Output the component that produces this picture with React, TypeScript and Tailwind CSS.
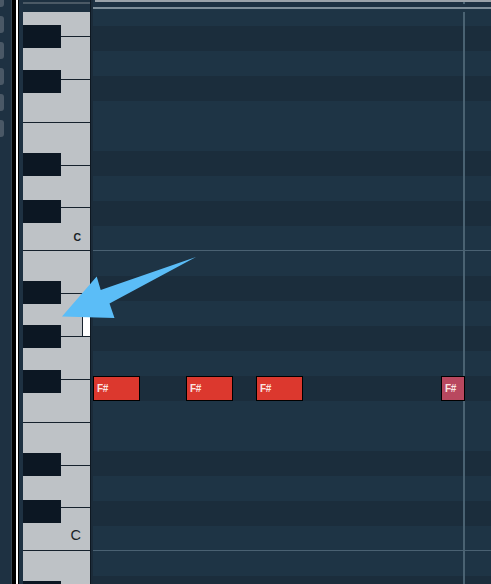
import React from "react";

// piano roll rows, from the partial A at the top downwards
const ROWS: Array<"w" | "b" | "c"> = [
  "b", "w", "b", "w", "w", "b", "w", "b", "c",
  "w", "b", "w", "b", "w", "b", "w", "w", "b", "w", "b", "c",
  "w", "b",
];

// white keys under the header; label / marker per key
const WHITE_KEYS: Array<{ h: string; label?: "sm" | "lg"; marker?: boolean }> = [
  { h: "h-[25px]" },
  { h: "h-[42.86px]" },
  { h: "h-[42.86px]" },
  { h: "h-[42.86px]" },
  { h: "h-[42.86px]" },
  { h: "h-[42.86px]", label: "sm" },
  { h: "h-[42.86px]" },
  { h: "h-[42.86px]", marker: true },
  { h: "h-[42.86px]" },
  { h: "h-[42.86px]" },
  { h: "h-[42.86px]" },
  { h: "h-[42.86px]" },
  { h: "h-[42.86px]", label: "lg" },
  { h: "h-[42.86px]" },
];

const BLACK_KEYS = [13, 58, 141, 188, 269, 313, 358, 441, 488, 569];

const NOTES = [
  { left: 0, w: 47, pink: false },
  { left: 93, w: 47, pink: false },
  { left: 163, w: 47, pink: false },
  { left: 348, w: 24, pink: true },
];

const Sidebar = () => (
  <div className="flex flex-col gap-[9px] w-[11px] shrink-0 bg-[#1e3142]">
    <div className="h-[7px] w-[4px] rounded-br-[3px] bg-[#4a5866]" />
    {[0, 1, 2, 3, 4].map((i) => (
      <div key={i} className="h-[17px] w-[4px] rounded-r-[3px] bg-[#4a5866]" />
    ))}
  </div>
);

const Keyboard = () => (
  <div className="flex flex-col w-[67px] shrink-0 bg-[#1d3040]">
    <div className="h-[12px] pt-[2px] shrink-0">
      <div className="h-[2px] bg-[#4b5965]" />
    </div>
    <div className="relative flex-1 overflow-hidden bg-[#bec2c6]">
      {WHITE_KEYS.map((k, i) => (
        <div
          key={i}
          className={`${k.h} relative flex items-end justify-end border-b border-[#16212c]`}
        >
          {k.label === "sm" && (
            <span className="pr-[9px] pb-[8px] text-[10.5px] leading-none font-bold text-[#1a1f26] font-['Liberation_Sans',Arial,sans-serif]">
              C
            </span>
          )}
          {k.label === "lg" && (
            <span className="pr-[9px] pb-[8px] text-[14.5px] leading-none text-[#1a1f26] font-['Liberation_Sans',Arial,sans-serif]">
              C
            </span>
          )}
          {k.marker && (
            <div className="absolute right-0 bottom-0 w-[8px] h-[19px] bg-white border-l border-[#16212c]" />
          )}
        </div>
      ))}
      {BLACK_KEYS.map((t) => (
        <div
          key={t}
          className="absolute left-0 w-[38px] h-[23px] bg-[#0c1723]"
          style={{ top: t }}
        />
      ))}
    </div>
  </div>
);

const Grid = () => (
  <div className="flex flex-col flex-1 bg-[#1e3142]">
    <div className="relative h-[9px] shrink-0">
      <div className="ml-[2px] h-[1.5px] bg-[#9ba2a9]" />
      <div className="absolute left-[370px] top-[2px] w-[2px] h-[2px] bg-[#4d6575]" />
      <div className="absolute left-0 right-0 bottom-0 h-[2px] bg-[#7f8e99]" />
    </div>
    <div className="relative flex-1 overflow-hidden">
      <div className="h-[17px] bg-[#1e3445]" />
      {ROWS.map((r, i) => (
        <div
          key={i}
          className={
            r === "b"
              ? "h-[25px] bg-[#1b2d3c]"
              : r === "c"
              ? "h-[25px] bg-[#1e3445] border-b border-[#4a6172]"
              : "h-[25px] bg-[#1e3445]"
          }
        />
      ))}
      <div className="absolute left-[370px] top-[3px] bottom-0 w-[2px] bg-[#4a6272]" />
      {NOTES.map((n, i) => (
        <div
          key={i}
          className={`absolute top-[367px] h-[25px] flex items-center pl-[3px] border border-black ${
            n.pink ? "bg-[#b9485f]" : "bg-[#dc382e]"
          }`}
          style={{ left: n.left, width: n.w }}
        >
          <span className="text-[10px] leading-none font-bold tracking-[-0.3px] text-[#fbe6e3] font-['Liberation_Sans',Arial,sans-serif]">
            F#
          </span>
        </div>
      ))}
    </div>
  </div>
);

export default function App() {
  return (
    <div className="relative flex w-[491px] h-[584px] overflow-hidden bg-[#1e3142]">
      <Sidebar />
      <div className="w-[1px] shrink-0 bg-[#34434f]" />
      <div className="w-[4px] shrink-0 bg-black" />
      <div className="w-[2px] shrink-0 bg-white" />
      <div className="w-[1px] shrink-0 bg-black" />
      <div className="w-[4px] shrink-0 bg-[#1e3142]" />
      <Keyboard />
      <div className="w-[1px] shrink-0 bg-[#0e1822]" />
      <div className="w-[2px] shrink-0 bg-[#1b2b39]" />
      <Grid />
      <svg
        className="absolute inset-0 pointer-events-none"
        width="491"
        height="584"
        viewBox="0 0 491 584"
      >
        <polygon
          points="62,316.5 96.7,276.5 100.7,290 196,257 109.5,303.5 114.5,318"
          fill="#5bbdf7"
        />
      </svg>
    </div>
  );
}
